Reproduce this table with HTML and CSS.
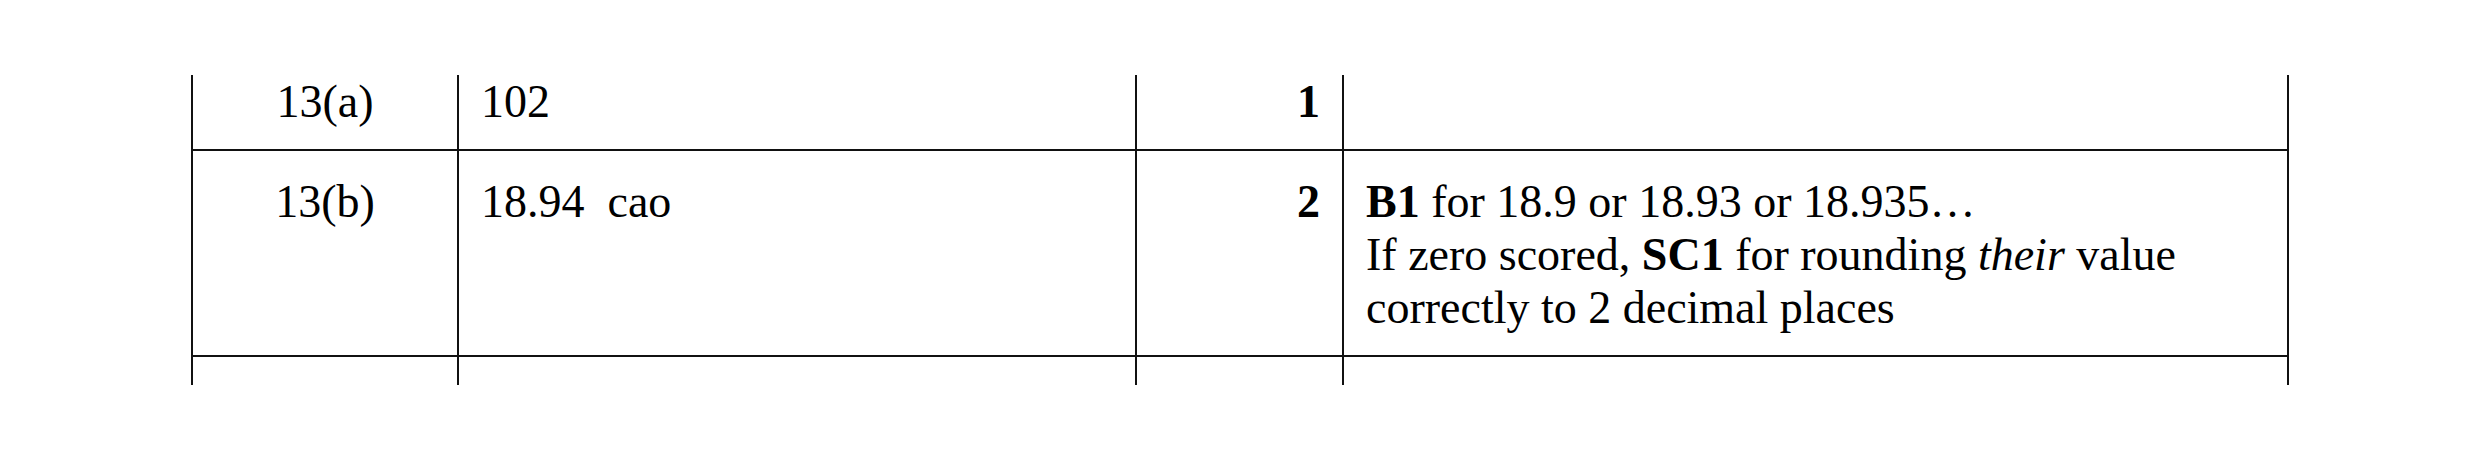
FILE: index.html
```html
<!DOCTYPE html>
<html lang="en">
<head>
<meta charset="utf-8">
<title>Mark scheme</title>
<link rel="stylesheet" href="styles.css">
</head>
<body>
<div class="page">
  <table class="scheme">
    <colgroup>
      <col class="c-q">
      <col class="c-ans">
      <col class="c-mark">
      <col class="c-notes">
    </colgroup>
    <tbody>
      <tr class="row cont">
        <td class="q">13(a)</td>
        <td class="ans">102</td>
        <td class="mark">1</td>
        <td class="notes"></td>
      </tr>
      <tr class="row">
        <td class="q">13(b)</td>
        <td class="ans">18.94&nbsp; cao</td>
        <td class="mark">2</td>
        <td class="notes">
          <p class="note-line"><b>B1</b> for 18.9 or 18.93 or 18.935…</p>
          <p class="note-line">If zero scored, <b>SC1</b> for rounding <i>their</i> value</p>
          <p class="note-line">correctly to 2 decimal places</p>
        </td>
      </tr>
      <tr class="row tail">
        <td class="q"></td>
        <td class="ans"></td>
        <td class="mark"></td>
        <td class="notes"></td>
      </tr>
    </tbody>
  </table>
</div>
</body>
</html>
```

FILE: styles.css
```css
html, body {
  margin: 0;
  padding: 0;
  background: #fff;
}

.page {
  padding: 75px 0 0 191px;
}

.scheme {
  table-layout: fixed;
  width: 2098px;
  border-collapse: separate;
  border-spacing: 0;
  font-family: "Liberation Serif", "Times New Roman", serif;
  font-size: 46px;
  line-height: 53px;
  color: #000;
}

.c-q { width: 266px; }
.c-ans { width: 678px; }
.c-mark { width: 207px; }
.c-notes { width: 947px; }

.scheme td {
  vertical-align: top;
  padding: 24px 22px 21px 22px;
  border-left: 2px solid #111;
  border-bottom: 2px solid #111;
}

.scheme td.notes {
  border-right: 2px solid #111;
}

.note-line {
  margin: 0;
  white-space: nowrap;
}

.row.cont td {
  padding-top: 0;
}

.row.tail td {
  padding: 0;
  height: 28px;
  border-bottom: none;
}

.q {
  text-align: center;
}

.ans {
  text-align: left;
}

.mark {
  text-align: right;
  font-weight: bold;
}

.notes {
  text-align: left;
}
```
